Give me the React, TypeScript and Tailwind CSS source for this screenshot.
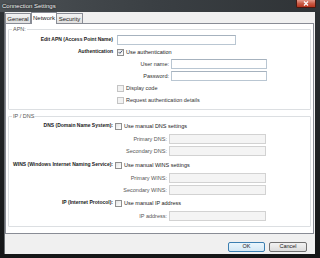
import React from "react";

function Check({ checked = false, disabled = false }: { checked?: boolean; disabled?: boolean }) {
  return (
    <div
      className={
        "w-[7px] h-[7px] shrink-0 border flex items-center justify-center " +
        (disabled
          ? "border-[#c4c4c4] bg-[#f2f2f2]"
          : "border-[#8f8f8f] bg-gradient-to-br from-[#e4e4e4] to-[#ffffff]")
      }
    >
      {checked && (
        <svg width="6" height="6" viewBox="0 0 6 6">
          <path d="M0.8 3.1 L2.3 4.6 L5.2 1.2" fill="none" stroke="#3a4a6a" strokeWidth="1.1" />
        </svg>
      )}
    </div>
  );
}

function Input({ w, disabled = false }: { w: string; disabled?: boolean }) {
  return (
    <div
      className={
        "h-[10px] shrink-0 border " +
        w +
        " " +
        (disabled ? "bg-[#f4f4f4] border-[#d2d2d2]" : "bg-white border-[#b9c6d2] border-t-[#a6b2be]")
      }
    />
  );
}

export default function App() {
  return (
    <div className="w-[320px] h-[258px] flex flex-col overflow-hidden bg-[#222426] font-['Liberation_Sans',Arial,sans-serif] text-[#1a1a1a]">
      {/* Title bar */}
      <div className="h-[12px] shrink-0 relative flex items-center pl-[2px] bg-gradient-to-r from-[#4b5054] via-[#3a3f43] to-[#2f3336]">
        <span className="text-[6px] leading-none text-[#f2f2f2] [text-shadow:0_0_2px_#000]">Connection Settings</span>
        <div className="absolute right-[4px] top-0 w-[20px] h-[8px] rounded-b-[2px] border border-t-0 border-[#4a1810] bg-gradient-to-b from-[#e3998b] via-[#c85a45] to-[#b8341c] flex items-center justify-center">
          <svg width="6" height="5" viewBox="0 0 6 5">
            <path d="M1 0.5 L5 4.5 M5 0.5 L1 4.5" stroke="#ffffff" strokeWidth="1.2" />
          </svg>
        </div>
      </div>

      {/* Frame + client */}
      <div className="flex-1 flex pl-[4px] pr-[5px] pb-[4px] bg-gradient-to-b from-[#2d3134] to-[#151617]">
        <div className="flex-1 flex flex-col bg-[#f0f0f0] border-l border-[#6a6e72]">
          {/* Tabs */}
          <div className="h-[11px] shrink-0 flex items-end pl-[0px] text-[6px] leading-none">
            <div className="h-[10px] px-[2px] w-[26px] flex items-center justify-center border border-b-0 border-[#898c95] bg-gradient-to-b from-[#f2f2f2] to-[#e1e1e1]">
              General
            </div>
            <div className="relative z-10 -mb-[1px] h-[12px] w-[26px] flex items-center justify-center border border-b-0 border-[#898c95] bg-white pb-[1px]">
              Network
            </div>
            <div className="h-[10px] w-[26px] flex items-center justify-center border border-b-0 border-l-0 border-[#898c95] bg-gradient-to-b from-[#f2f2f2] to-[#e1e1e1]">
              Security
            </div>
          </div>

          {/* Panel */}
          <div className="mr-[1px] h-[211px] shrink-0 bg-white border border-[#898c95] flex flex-col px-[2px]">
            {/* APN group */}
            <div className="relative mt-[5px] border border-[#dcdfe2] rounded-[1px] pt-[5px] pb-[4px] flex flex-col gap-[2px]">
              <span className="absolute left-[3px] -top-[4px] bg-white px-[1px] text-[5.5px] leading-[7px] text-[#555]">APN:</span>
              <div className="h-[10px] flex items-center">
                <div className="w-[104px] text-right text-[5px] font-bold whitespace-nowrap">Edit APN (Access Point Name)</div>
                <div className="ml-[4px]"><Input w="w-[119px]" /></div>
              </div>
              <div className="h-[10px] flex items-center">
                <div className="w-[104px] text-right text-[5px] font-bold whitespace-nowrap">Authentication</div>
                <div className="ml-[4px]"><Check checked /></div>
                <span className="ml-[2px] text-[5.5px]">Use authentication</span>
              </div>
              <div className="h-[10px] flex items-center">
                <div className="w-[160px] text-right text-[5.5px] text-[#333]">User name:</div>
                <div className="ml-[2px]"><Input w="w-[96px]" /></div>
              </div>
              <div className="h-[10px] flex items-center">
                <div className="w-[160px] text-right text-[5.5px] text-[#333]">Password:</div>
                <div className="ml-[2px]"><Input w="w-[96px]" /></div>
              </div>
              <div className="h-[10px] flex items-center">
                <div className="w-[104px]" />
                <div className="ml-[4px]"><Check disabled /></div>
                <span className="ml-[2px] text-[5.5px] text-[#333]">Display code</span>
              </div>
              <div className="h-[10px] flex items-center">
                <div className="w-[104px]" />
                <div className="ml-[4px]"><Check disabled /></div>
                <span className="ml-[2px] text-[5.5px] text-[#333]">Request authentication details</span>
              </div>
            </div>

            {/* IP / DNS group */}
            <div className="relative mt-[6px] border border-[#dcdfe2] rounded-[1px] pt-[4px] pb-[5px] flex flex-col">
              <span className="absolute left-[3px] -top-[4px] bg-white px-[1px] text-[5.5px] leading-[7px] text-[#555]">IP / DNS</span>
              <div className="h-[10px] flex items-center">
                <div className="w-[104px] text-right text-[5px] font-bold whitespace-nowrap">DNS (Domain Name System):</div>
                <div className="ml-[2px]"><Check /></div>
                <span className="ml-[2px] text-[5.5px]">Use manual DNS settings</span>
              </div>
              <div className="mt-[3px] h-[10px] flex items-center">
                <div className="w-[158px] text-right text-[5.5px] text-[#555]">Primary DNS:</div>
                <div className="ml-[2px]"><Input w="w-[97px]" disabled /></div>
              </div>
              <div className="mt-[2px] h-[10px] flex items-center">
                <div className="w-[158px] text-right text-[5.5px] text-[#555]">Secondary DNS:</div>
                <div className="ml-[2px]"><Input w="w-[97px]" disabled /></div>
              </div>
              <div className="mt-[4px] h-[10px] flex items-center">
                <div className="w-[104px] text-right text-[5px] font-bold whitespace-nowrap">WINS (Windows Internet Naming Service):</div>
                <div className="ml-[2px]"><Check /></div>
                <span className="ml-[2px] text-[5.5px]">Use manual WINS settings</span>
              </div>
              <div className="mt-[3px] h-[10px] flex items-center">
                <div className="w-[158px] text-right text-[5.5px] text-[#555]">Primary WINS:</div>
                <div className="ml-[2px]"><Input w="w-[97px]" disabled /></div>
              </div>
              <div className="mt-[2px] h-[10px] flex items-center">
                <div className="w-[158px] text-right text-[5.5px] text-[#555]">Secondary WINS:</div>
                <div className="ml-[2px]"><Input w="w-[97px]" disabled /></div>
              </div>
              <div className="mt-[3px] h-[10px] flex items-center">
                <div className="w-[104px] text-right text-[5px] font-bold whitespace-nowrap">IP (Internet Protocol):</div>
                <div className="ml-[2px]"><Check /></div>
                <span className="ml-[2px] text-[5.5px]">Use manual IP address</span>
              </div>
              <div className="mt-[3px] h-[10px] flex items-center">
                <div className="w-[158px] text-right text-[5.5px] text-[#555]">IP address:</div>
                <div className="ml-[2px]"><Input w="w-[97px]" disabled /></div>
              </div>
            </div>
          </div>

          {/* Buttons */}
          <div className="flex-1 flex items-start justify-end pt-[8px] pr-[8px] gap-[4px] text-[5.5px] leading-none">
            <div className="w-[37px] h-[10px] rounded-[2px] border border-[#3c7fb1] bg-gradient-to-b from-[#eaf6fd] to-[#d4e8f5] flex items-center justify-center">
              OK
            </div>
            <div className="w-[38px] h-[10px] rounded-[2px] border border-[#707070] bg-gradient-to-b from-[#f2f2f2] to-[#dcdcdc] flex items-center justify-center">
              Cancel
            </div>
          </div>
        </div>
      </div>
    </div>
  );
}
